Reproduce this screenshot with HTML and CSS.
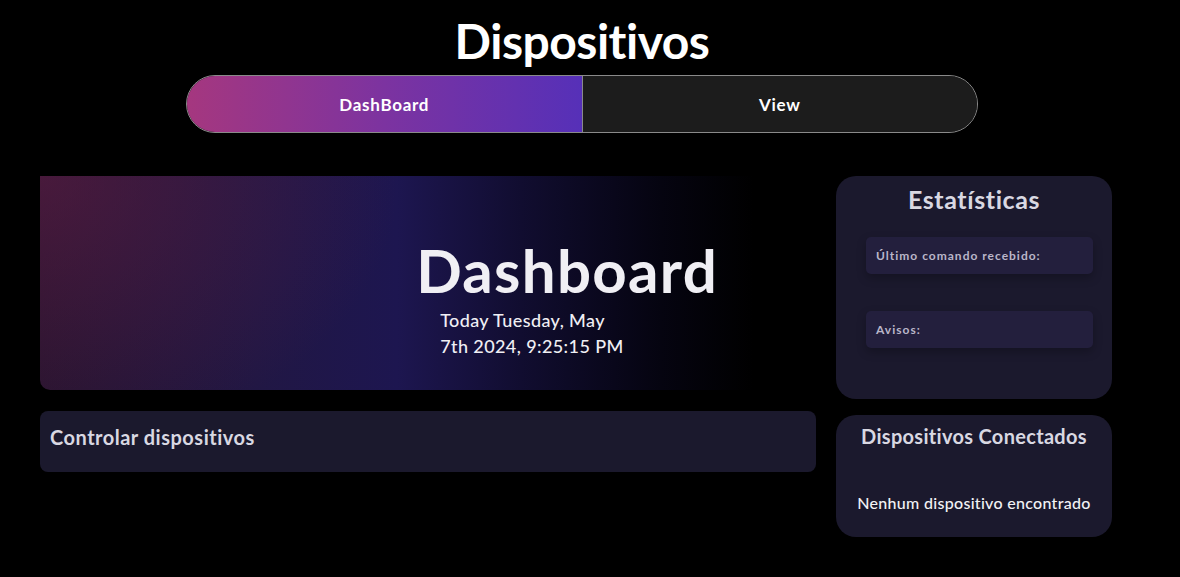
FILE: index.html
```html
<!DOCTYPE html>
<html lang="pt">
<head>
<meta charset="utf-8">
<title>Dispositivos</title>
<link rel="stylesheet" href="styles.css">
</head>
<body>
<header class="top">
  <h1 class="page-title">Dispositivos</h1>
  <nav class="tabs">
    <button class="tab tab-active">DashBoard</button>
    <button class="tab">View</button>
  </nav>
</header>
<main class="layout">
  <section class="left-col">
    <div class="hero">
      <div class="hero-text">
        <h2 class="hero-title">Dashboard</h2>
        <p class="hero-date">Today Tuesday, May<br>7th 2024, 9:25:15 PM</p>
      </div>
    </div>
    <div class="control-card">
      <h3 class="control-title">Controlar dispositivos</h3>
    </div>
  </section>
  <aside class="right-col">
    <div class="stats-card">
      <h3 class="stats-title">Estatísticas</h3>
      <div class="stat-box">Último comando recebido:</div>
      <div class="stat-box">Avisos:</div>
    </div>
    <div class="devices-card">
      <h3 class="devices-title">Dispositivos Conectados</h3>
      <p class="devices-empty">Nenhum dispositivo encontrado</p>
    </div>
  </aside>
</main>
</body>
</html>
```
FILE: styles.css
```css
* { box-sizing: border-box; }
body {
  margin: 0;
  background: #000;
  font-family: "Lato", "Liberation Sans", sans-serif;
  color: #fff;
  width: 1180px;
  height: 577px;
  overflow: hidden;
}
.top {
  display: flex;
  flex-direction: column;
  align-items: center;
  padding-right: 16px;
}
.page-title {
  margin: 10px 0 0;
  font-size: 48px;
  line-height: 62px;
  font-weight: 700;
  color: #fff;
  letter-spacing: -0.5px;
}
.tabs {
  margin-top: 3px;
  width: 792px;
  height: 58px;
  display: flex;
  border: 1px solid #8a8a8a;
  border-radius: 29px;
  overflow: hidden;
  background: #1c1c1c;
}
.tab {
  flex: 1;
  border: none;
  background: #1c1c1c;
  color: #fff;
  font-family: inherit;
  font-weight: 700;
  font-size: 17px;
  letter-spacing: 0.7px;
  padding: 0;
}
.tab-active {
  background: linear-gradient(90deg, #a5377f 0%, #7c33a0 50%, #5630b8 100%);
  border-right: 1px solid #8a8a8a;
}
.layout {
  display: flex;
  gap: 20px;
  margin: 43px 0 0 40px;
  align-items: flex-start;
}
.left-col {
  width: 776px;
  display: flex;
  flex-direction: column;
  gap: 21px;
}
.hero {
  height: 214px;
  border-radius: 0 0 0 10px;
  background:
    radial-gradient(ellipse 360px 270px at 0% 0%, rgba(100, 30, 70, 0.55), rgba(100, 30, 70, 0) 100%),
    linear-gradient(90deg, #26142f 0%, #211744 28%, #1d1650 46%, #110d30 62%, #050410 80%, #000 92%);
  display: flex;
  justify-content: flex-end;
  padding-right: 98px;
}
.hero-text {
  display: flex;
  flex-direction: column;
  align-items: flex-start;
  padding-top: 59px;
}
.hero-title {
  margin: 0;
  font-size: 60px;
  line-height: 70px;
  font-weight: 700;
  color: #f0eff4;
  letter-spacing: 1.3px;
}
.hero-date {
  margin: 2px 0 0 24px;
  font-size: 18px;
  line-height: 26px;
  font-weight: 500;
  color: #f0eff4;
  letter-spacing: 0.4px;
}
.control-card {
  height: 61px;
  background: #1b192d;
  border-radius: 8px;
  padding: 13px 10px;
}
.control-title {
  margin: 0;
  font-size: 20px;
  line-height: 26px;
  font-weight: 700;
  color: #d9d8e2;
  letter-spacing: 0.5px;
}
.right-col {
  width: 276px;
  display: flex;
  flex-direction: column;
  gap: 16px;
}
.stats-card {
  height: 223px;
  background: #1b192d;
  border-radius: 20px;
  padding: 9px 19px 0 30px;
  display: flex;
  flex-direction: column;
}
.stats-title {
  margin: 0 0 23px -11px;
  text-align: center;
  font-size: 25px;
  line-height: 29px;
  font-weight: 700;
  color: #d9d8e2;
  letter-spacing: 0.6px;
}
.stat-box {
  height: 37px;
  background: #231f3d;
  border-radius: 5px;
  padding: 0 10px;
  display: flex;
  align-items: center;
  font-size: 12px;
  font-weight: 700;
  letter-spacing: 1px;
  color: #bab6c9;
  box-shadow: 0 4px 10px rgba(0, 0, 0, 0.25);
  margin-bottom: 37px;
}
.devices-card {
  height: 122px;
  background: #1b192d;
  border-radius: 20px;
  padding: 9px 6px 0;
  text-align: center;
}
.devices-title {
  margin: 0;
  font-size: 20px;
  line-height: 24px;
  font-weight: 700;
  color: #d9d8e2;
  letter-spacing: 0.3px;
}
.devices-empty {
  margin: 45px 0 0;
  font-size: 16px;
  line-height: 20px;
  font-weight: 500;
  color: #f2f2f5;
  letter-spacing: 0.3px;
}
```
